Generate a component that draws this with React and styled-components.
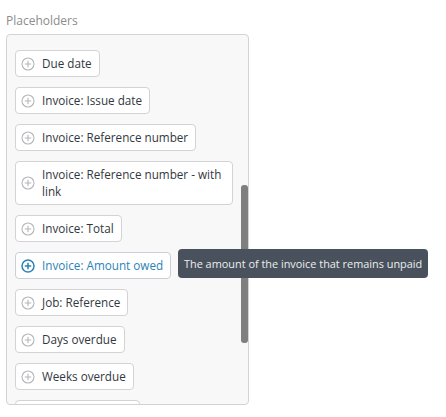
import React from "react";
import styled, { createGlobalStyle } from "styled-components";

const GlobalStyle = createGlobalStyle`
    body {
        margin: 0;
        background: #ffffff;
        font-family: "Open Sans", "Noto Sans", sans-serif;
    }
`;

const Page = styled.div`
    padding: 12px 0 0 6px;
    width: 243px;
`;

const Label = styled.div`
    color: #8c8c8c;
    font-size: 12px;
    line-height: 17px;
    margin-bottom: 5px;
`;

const Wrap = styled.div`
    position: relative;
`;

const Panel = styled.div`
    position: relative;
    height: 369px;
    border: 1px solid #d3d3d6;
    border-radius: 4px;
    background: #f8f8f8;
    overflow: hidden;
`;

const List = styled.div`
    display: flex;
    flex-direction: column;
    align-items: flex-start;
    gap: 10px;
    padding: 15px 15px 0 8px;
`;

const Chip = styled.div`
    display: flex;
    align-items: center;
    gap: 7px;
    max-width: 100%;
    box-sizing: border-box;
    padding: 4px 7px 4px 5px;
    background: #ffffff;
    border: 1px solid ${(p) => (p.$active ? "#c9cfd6" : "#d3d3d6")};
    border-radius: 4px;
    color: ${(p) => (p.$active ? "#2b82b5" : "#333840")};
    font-size: 11.7px;
    line-height: 17px;
`;

const ChipText = styled.span`
    flex: 1;
`;

const Thumb = styled.div`
    position: absolute;
    right: 0;
    top: 150px;
    width: 7px;
    height: 158px;
    background: #7f7f7f;
    border-radius: 3px;
`;

const Tooltip = styled.div`
    position: absolute;
    left: 172px;
    top: 215px;
    white-space: nowrap;
    background: #49525c;
    color: #eceef0;
    font-size: 10.9px;
    line-height: 17px;
    padding: 6px 6px;
    border-radius: 4px;
    z-index: 5;
`;

function PlusIcon({ active }) {
    const c = active ? "#2b82b5" : "#b4b6ba";
    return (
        <svg width="14" height="14" viewBox="0 0 14 14" style={{ flexShrink: 0 }}>
            <circle cx="7" cy="7" r="6" fill="none" stroke={c} strokeWidth={active ? 1.5 : 1.1} />
            <path d="M7 3.8v6.4M3.8 7h6.4" stroke={c} strokeWidth={active ? 1.5 : 1.1} />
        </svg>
    );
}

const items = [
    "Due date",
    "Invoice: Issue date",
    "Invoice: Reference number",
    "Invoice: Reference number - with link",
    "Invoice: Total",
    "Invoice: Amount owed",
    "Job: Reference",
    "Days overdue",
    "Weeks overdue",
    "Months overdue",
];

export default function App() {
    return (
        <>
            <GlobalStyle />
            <Page>
                <Label>Placeholders</Label>
                <Wrap>
                    <Panel>
                        <List>
                            {items.map((t) => {
                                const active = t === "Invoice: Amount owed";
                                return (
                                    <Chip key={t} $active={active}>
                                        <PlusIcon active={active} />
                                        <ChipText>{t}</ChipText>
                                    </Chip>
                                );
                            })}
                        </List>
                        <Thumb />
                    </Panel>
                    <Tooltip>The amount of the invoice that remains unpaid</Tooltip>
                </Wrap>
            </Page>
        </>
    );
}
